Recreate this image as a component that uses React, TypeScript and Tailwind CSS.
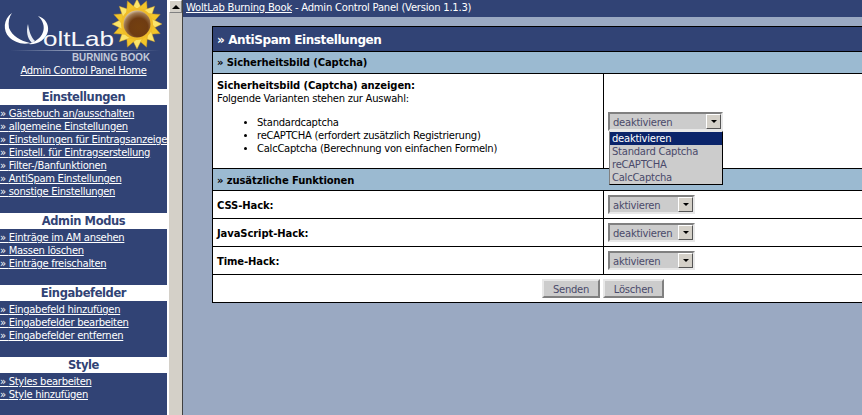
import React from "react";

const petals = Array.from({ length: 16 }, (_, i) => (i * 360) / 16);

function Logo() {
  return (
    <svg width="167" height="66" viewBox="0 0 167 66" className="block">
      <defs>
        <radialGradient id="seed" cx="0.56" cy="0.62" r="0.68">
          <stop offset="0" stopColor="#74400f" />
          <stop offset="0.5" stopColor="#6f3c12" />
          <stop offset="0.78" stopColor="#a07a52" />
          <stop offset="1" stopColor="#efe6d6" />
        </radialGradient>
        <linearGradient id="line" x1="0" x2="1" y1="0" y2="0">
          <stop offset="0" stopColor="#314375" />
          <stop offset="0.5" stopColor="#aab4cc" />
          <stop offset="1" stopColor="#314375" />
        </linearGradient>
      </defs>
      <path d="M12 13 C3 19 3 31 9 37 C14 42 22 45 30 43 C21 41 12 36 9 28 C8 22 9 17 12 13Z" fill="#fff" />
      <path d="M28 24 C26 31 27 38 32 43 L35 41 C31 37 29 31 28 24Z" fill="#e8ecf4" />
      <path d="M38 16 C43 20 45 27 43 32 C41 38 35 42 28 44 C37 45 46 40 48 31 C49 24 45 18 38 16Z" fill="#fff" />
      <text x="43" y="46" fill="#f7f8fb" fontFamily="'Liberation Sans',sans-serif" fontSize="21" textLength="71" lengthAdjust="spacingAndGlyphs">oltLab</text>
      <rect x="10" y="50" width="150" height="1" fill="url(#line)" />
      <text x="72" y="61" fill="#c3cad9" fontFamily="'Liberation Sans',sans-serif" fontWeight="700" fontSize="10" textLength="78" lengthAdjust="spacingAndGlyphs">BURNING BOOK</text>
      <g transform="translate(137 24)">
        {petals.map((a, i) => (
          <path key={a} d="M-6 -13 L0 -25 L6 -13Z" fill={i % 2 === 0 ? "#fbe56a" : "#f2c52a"} stroke="#d59c1c" strokeWidth="0.4" transform={`rotate(${a})`} />
        ))}
        <circle r="16" fill="#efbc28" />
        <circle r="13.5" fill="url(#seed)" />
      </g>
    </svg>
  );
}

function NavSection({ title, links, className }: { title: string; links: string[]; className: string }) {
  return (
    <div className={className}>
      <div className="flex h-4 items-center justify-center bg-white pt-[2px] text-[11.5px] font-bold tracking-[-0.4px] text-[#314375]">{title}</div>
      <ul className="pt-[2px]">
        {links.map((l) => (
          <li key={l} className="h-[13px] whitespace-nowrap text-[10px] leading-[13px] tracking-[-0.3px] text-white underline">
            » {l}
          </li>
        ))}
      </ul>
    </div>
  );
}

function Select({ value, wide }: { value: string; wide?: boolean }) {
  return (
    <div
      className={`flex h-[19px] items-stretch border-2 border-t-[#808080] border-l-[#808080] border-b-[#e8e8e8] border-r-[#e8e8e8] bg-[#cccccc] ${
        wide ? "w-[115px]" : "w-[87px]"
      }`}
    >
      <span className="flex-1 whitespace-nowrap pl-[3px] text-[10px] leading-[17px] tracking-[-0.25px] text-[#4a4a6a]">{value}</span>
      <span className="flex w-[15px] items-center justify-center border border-t-white border-l-white border-b-[#555555] border-r-[#555555] bg-[#d4d0c8]">
        <span className="h-0 w-0 border-x-[3px] border-t-[3px] border-x-transparent border-t-black" />
      </span>
    </div>
  );
}

function Button({ children, className }: { children: React.ReactNode; className: string }) {
  return (
    <button
      className={`h-[19px] border-2 border-t-[#e8e8e8] border-l-[#e8e8e8] border-b-[#808080] border-r-[#808080] bg-[#cccccc] pt-[2px] text-[10px] leading-none tracking-[-0.25px] text-[#4a4a6a] ${className}`}
    >
      {children}
    </button>
  );
}

function HackRow({ label, value }: { label: string; value: string }) {
  return (
    <div className="flex h-[28px] border-b border-black">
      <div className="flex w-[391px] items-center border-r border-black pl-1 pt-[2px] text-[10px] font-bold tracking-[-0.1px] text-black">{label}</div>
      <div className="flex flex-1 items-center pl-[4px]">
        <Select value={value} />
      </div>
    </div>
  );
}

export default function App() {
  return (
    <div className="flex h-[415px] w-[862px] overflow-hidden bg-[#9aa9c2] [font-family:'DejaVu_Sans',sans-serif]">
      <aside className="w-[167px] shrink-0 overflow-hidden bg-[#314375]">
        <Logo />
        <div className="h-[23px] text-center text-[10px] leading-[9px] tracking-[-0.33px] text-white underline">Admin Control Panel Home</div>
        <NavSection
          title="Einstellungen"
          className="mb-[15px]"
          links={[
            "Gästebuch an/ausschalten",
            "allgemeine Einstellungen",
            "Einstellungen für Eintragsanzeige",
            "Einstell. für Eintragserstellung",
            "Filter-/Banfunktionen",
            "AntiSpam Einstellungen",
            "sonstige Einstellungen",
          ]}
        />
        <NavSection title="Admin Modus" className="mb-[15px]" links={["Einträge im AM ansehen", "Massen löschen", "Einträge freischalten"]} />
        <NavSection title="Eingabefelder" className="mb-[15px]" links={["Eingabefeld hinzufügen", "Eingabefelder bearbeiten", "Eingabefelder entfernen"]} />
        <NavSection title="Style" className="" links={["Styles bearbeiten", "Style hinzufügen"]} />
      </aside>
      <div className="w-[2px] shrink-0 bg-white" />
      <div className="flex w-[13px] shrink-0 flex-col bg-[#d4d0c8]">
        <div className="flex h-[13px] items-center justify-center border border-t-white border-l-white border-b-[#808080] border-r-[#808080]">
          <span className="h-0 w-0 border-x-[4px] border-b-[4px] border-x-transparent border-b-black" />
        </div>
      </div>
      <div className="w-[1px] shrink-0 bg-[#404040]" />
      <main className="min-w-0 flex-1">
        <div className="h-[17px] whitespace-nowrap bg-[#314375] pl-[3px] text-[10px] leading-[16px] tracking-[-0.22px] text-white">
          <span className="underline">WoltLab Burning Book</span> - Admin Control Panel (Version 1.1.3)
        </div>
        <div className="pl-[29px] pt-[9px]">
          <div className="w-[660px] border border-black bg-white">
            <div className="flex h-[25px] items-center border-b border-black bg-[#314375] pl-1 pt-[2px] text-[12px] font-bold tracking-[-0.4px] text-white">» AntiSpam Einstellungen</div>
            <div className="flex h-[22px] items-center border-b border-black bg-[#9bbad1] pl-1 text-[10px] font-bold tracking-[-0.1px] text-black">» Sicherheitsbild (Captcha)</div>
            <div className="flex h-[95px] border-b border-black">
              <div className="w-[391px] border-r border-black pl-1 pt-[5px] text-[10px] leading-[13px] tracking-[-0.25px] text-black">
                <div className="font-bold tracking-[-0.1px]">Sicherheitsbild (Captcha) anzeigen:</div>
                <div>Folgende Varianten stehen zur Auswahl:</div>
                <ul className="mt-[11px] list-disc pl-[40px]">
                  <li>Standardcaptcha</li>
                  <li>reCAPTCHA (erfordert zusätzlich Registrierung)</li>
                  <li>CalcCaptcha (Berechnung von einfachen Formeln)</li>
                </ul>
              </div>
              <div className="relative flex flex-1 items-center pl-[4px]">
                <Select value="deaktivieren" wide />
                <div className="absolute left-[5px] top-[57px] z-10 w-[114px] border border-b-black border-r-black border-l-[#808080] border-t-[#e8e8e8] bg-[#cccccc] text-[10px] leading-[13px] tracking-[-0.25px] text-[#4a4a6a]">
                  <div className="bg-[#0a246a] pl-[2px] text-white">deaktivieren</div>
                  <div className="pl-[2px]">Standard Captcha</div>
                  <div className="pl-[2px]">reCAPTCHA</div>
                  <div className="pl-[2px]">CalcCaptcha</div>
                </div>
              </div>
            </div>
            <div className="flex h-[22px] items-center border-b border-black bg-[#9bbad1] pl-1 pt-[2px] text-[10px] font-bold tracking-[-0.1px] text-black">» zusätzliche Funktionen</div>
            <HackRow label="CSS-Hack:" value="aktivieren" />
            <HackRow label="JavaScript-Hack:" value="deaktivieren" />
            <HackRow label="Time-Hack:" value="aktivieren" />
            <div className="flex h-[27px] items-center gap-[3px] pl-[329px]">
              <Button className="w-[58px]">Senden</Button>
              <Button className="w-[61px]">Löschen</Button>
            </div>
          </div>
        </div>
      </main>
    </div>
  );
}
